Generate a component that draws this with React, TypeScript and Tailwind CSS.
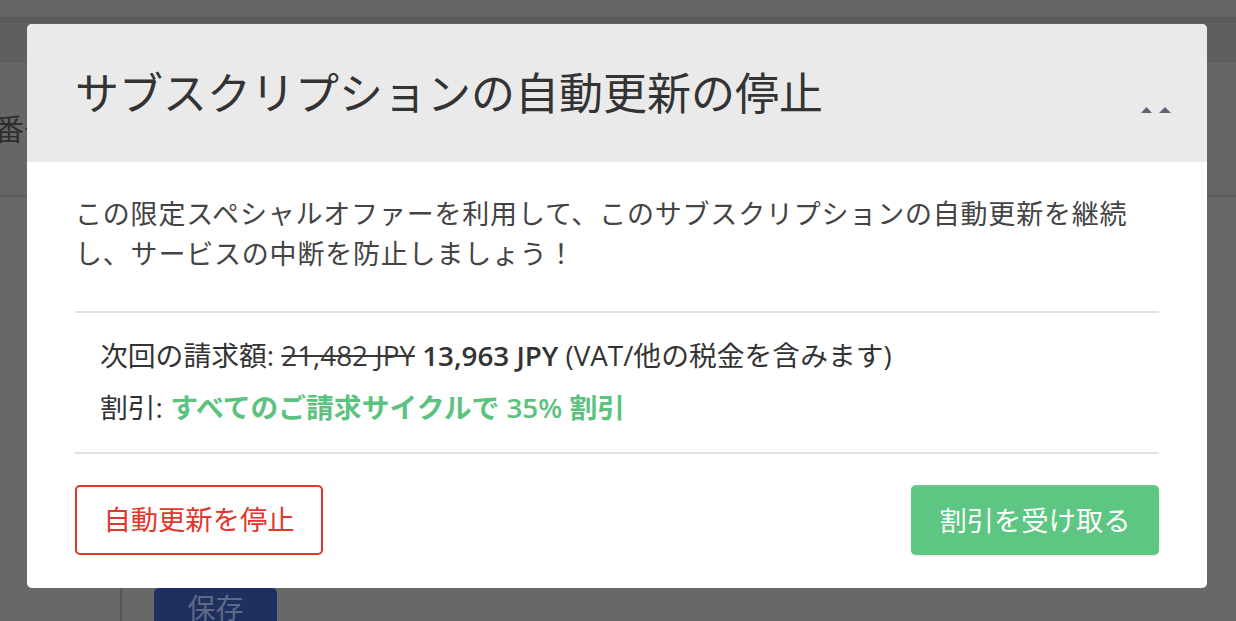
import React from "react";

export default function App() {
  const font = { fontFamily: '"Open Sans", "Noto Sans CJK JP", sans-serif' };
  return (
    <div className="relative w-[1236px] h-[621px] overflow-hidden bg-[#686868]" style={font}>
      {/* dimmed page underneath */}
      <div className="flex flex-col h-full">
        <div className="h-[17px] bg-[#646464]" />
        <div className="h-[45px] bg-[#5f5f5f] border-t-[5px] border-[#5a5a5a] border-b border-b-[#595959]" />
        <div className="h-[135px] bg-[#666666] border-b-2 border-[#5a5a5a] flex items-center">
          <span className="ml-[-6px] text-[30px] text-[#2e2e2e]">番号</span>
        </div>
        <div className="flex-1 flex">
          <div className="w-[122px] border-r-2 border-[#575757]" />
          <div className="flex-1 flex flex-col justify-end pl-[32px]">
            <div className="w-[123px] h-[33px] bg-[#1f2f5f] rounded-t-[5px] flex items-start justify-center pt-[6px]">
              <span className="text-[28px] leading-none text-[#5d6a86]">保存</span>
            </div>
          </div>
        </div>
      </div>

      {/* modal */}
      <div className="absolute left-[27px] top-[24px] w-[1180px] h-[564px] bg-white rounded-[5px] overflow-hidden flex flex-col">
        <div className="h-[138px] bg-[#eaeaea] flex items-center justify-between pl-[48px] pr-[36px]">
          <h1 className="text-[44px] font-normal text-[#333333] leading-none">
            サブスクリプションの自動更新の停止
          </h1>
          <div className="flex gap-[7px] mt-[34px]">
            <svg width="11" height="6" viewBox="0 0 11 6"><path d="M5.5 0L11 6H0z" fill="#5b6570" /></svg>
            <svg width="12" height="6" viewBox="0 0 12 6"><path d="M6 0L12 6H0z" fill="#5b6570" /></svg>
          </div>
        </div>
        <div className="flex-1 px-[48px] pt-[32px] flex flex-col">
          <p className="text-[27px] tracking-[0.8px] leading-[40px] text-[#444444] pr-[10px]">
            この限定スペシャルオファーを利用して、このサブスクリプションの自動更新を継続し、サービスの中断を防止しましょう！
          </p>
          <div className="mt-[37px] border-t-2 border-[#dfe2e5]" />
          <div className="pt-[16px] pb-[19px] pl-[25px] text-[27.8px] leading-[52px] text-[#333333]">
            <div>
              次回の請求額: <span className="line-through text-[#3a3a3a]">21,482 JPY</span>{" "}
              <span className="font-semibold">13,963 JPY</span> (VAT/他の税金を含みます)
            </div>
            <div>
              割引: <span className="font-semibold text-[#5cc37f]">すべてのご請求サイクルで 35% 割引</span>
            </div>
          </div>
          <div className="border-t-2 border-[#dfe2e5]" />
          <div className="mt-[31px] flex justify-between">
            <button className="w-[248px] h-[70px] border-2 border-[#e2372d] rounded-[5px] bg-white text-[27.3px] text-[#e2372d] flex items-center justify-center">
              自動更新を停止
            </button>
            <button className="w-[248px] h-[70px] rounded-[5px] bg-[#5dc682] text-[27.3px] text-white flex items-center justify-center shadow-[0_1px_2px_rgba(0,0,0,0.12)] border-t-2 border-[#68cb8a]">
              割引を受け取る
            </button>
          </div>
        </div>
      </div>
    </div>
  );
}
